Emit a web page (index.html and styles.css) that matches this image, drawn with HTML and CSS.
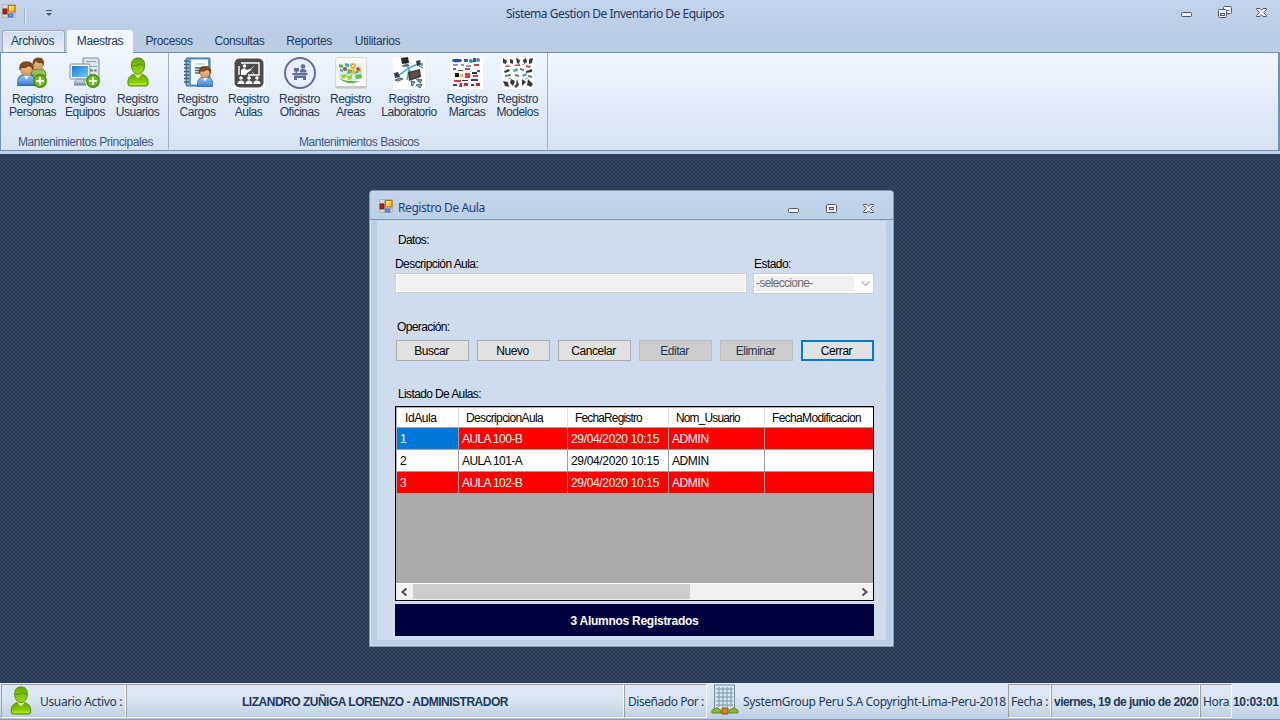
FILE: index.html
```html
<!DOCTYPE html>
<html lang="es">
<head>
<meta charset="utf-8">
<title>Sistema Gestion De Inventario De Equipos</title>
<link rel="stylesheet" href="styles.css">
</head>
<body>
<svg class="defs" width="0" height="0">
  <defs>
    <linearGradient id="green" x1="0" y1="0" x2="0" y2="1"><stop offset="0" stop-color="#64a80c"/><stop offset="1" stop-color="#9be000"/></linearGradient>
    <linearGradient id="blue" x1="0" y1="0" x2="0" y2="1"><stop offset="0" stop-color="#9cc8f4"/><stop offset="1" stop-color="#3f80d0"/></linearGradient>
    <linearGradient id="skin" x1="0" y1="0" x2="0" y2="1"><stop offset="0" stop-color="#f2c48c"/><stop offset="1" stop-color="#d69a62"/></linearGradient>
    <linearGradient id="screen" x1="0" y1="0" x2="1" y2="1"><stop offset="0" stop-color="#1b7cd4"/><stop offset="1" stop-color="#6cc8fb"/></linearGradient>
    <linearGradient id="gold" x1="0" y1="0" x2="1" y2="1"><stop offset="0" stop-color="#ffeb8a"/><stop offset="1" stop-color="#eeaa00"/></linearGradient>
    <symbol id="app" viewBox="0 0 14 14">
      <path d="M.5.5h13v13H.5zM.5 4.500h5M5.500 .5v13M5.500 9.500h8" fill="#d3d7df" stroke="#b5b5b5"/>
      <rect x="1" y="5" width="4" height="5" fill="#b91a12" stroke="#7c1414" stroke-width=".8"/>
      <rect x="6.500" y="1.500" width="6.500" height="6.500" fill="url(#gold)" stroke="#b27600"/>
      <rect x="6.500" y="10" width="4.500" height="3" fill="#5c9bf0" stroke="#2f62c4" stroke-width=".8"/>
    </symbol>
    <symbol id="user" viewBox="0 0 22 30">
      <path d="M1 25c0-5 3-7 7-8h6c4 1 7 3 7 8v2q0 2-2 2H3q-2 0-2-2z" fill="url(#green)" stroke="#4f8d0a"/>
      <path d="M7.500 17.500l3.500 4 3.500-4-1-2h-5z" fill="#dce878"/>
      <path d="M4.500 8C4.500 3 7 1 11 1s6.500 2 6.500 7c0 6-3 9-6.500 9s-6.500-3-6.500-9z" fill="url(#green)" stroke="#4f8d0a"/>
      <path d="M5.500 8.500c4 1 6-1 8-1.500 1.500 1 2 1.500 3.500 1.500" fill="none" stroke="#538f08"/>
      <path d="M3 27h16" stroke="#c0ec42"/>
    </symbol>
    <symbol id="man" viewBox="0 0 18 24">
      <path d="M.6 20c0-4 2-6 6-7h5c4 1 6 3 6 7v3.400H.6z" fill="url(#blue)" stroke="#3568a8"/>
      <path d="M6 13l3 5 3-5z" fill="#fff"/>
      <path d="M3.500 7q0-5 5.500-5t5.500 5q0 7-5.500 7T3.500 7z" fill="url(#skin)" stroke="#9a6437" stroke-width=".7"/>
      <path d="M2.500 8.500Q1.500.7 9 .7t6.500 7.800l-1.500-2.500-3-1.500Q8 7.500 4 6z" fill="#7d4a20" stroke="#59320f" stroke-width=".7"/>
    </symbol>
    <symbol id="plus" viewBox="0 0 14 14">
      <circle cx="7" cy="7" r="6.300" fill="#6cc010" stroke="#408308" stroke-width="1.200"/>
      <path d="M7 3.200v7.600M3.200 7h7.600" stroke="#fff" stroke-width="2.200"/>
    </symbol>
    <symbol id="minimize" viewBox="0 0 11 5"><rect x=".5" y=".5" width="10" height="4" rx="1" fill="#f2f5fb" stroke="#50566a"/></symbol>
    <symbol id="close" viewBox="0 0 11 9">
      <path d="M.5.5H4l1.500 1.700L7 .5h3.500v1l-3 3 3 3v1H7L5.500 6.800 4 8.500H.5v-1l3-3-3-3z" fill="#f5f7fc" stroke="#50566a"/>
    </symbol>
  </defs>
</svg>

<div class="app">
  <header class="titlebar">
    <svg class="app-icon" width="14" height="14"><use href="#app"/></svg>
    <span class="quick-sep"></span>
    <svg class="quick-arrow" width="6" height="6" viewBox="0 0 6 6"><path d="M0 .5h6" stroke="#50566a"/><path d="M0 3h6L3 6z" fill="#50566a"/></svg>
    <h1 class="app-title">Sistema Gestion De Inventario De Equipos</h1>
    <div class="app-controls">
      <svg width="11" height="5"><use href="#minimize"/></svg>
      <svg class="restore" width="14" height="12" viewBox="0 0 14 12"><rect x="5.500" y=".5" width="8" height="7" rx="1" fill="#f2f5fb" stroke="#50566a"/><path d="M9 4.500h2.500" stroke="#50566a"/><rect x=".5" y="3.500" width="8" height="8" rx="1" fill="#f2f5fb" stroke="#50566a"/><rect x="2.500" y="7.500" width="4" height="2" fill="#cddaeb" stroke="#50566a"/></svg>
      <svg width="11" height="9"><use href="#close"/></svg>
    </div>
  </header>

  <nav class="tabs">
    <span class="tab tab-file">Archivos</span>
    <span class="tab tab-active">Maestras</span>
    <span class="tab tab-procesos">Procesos</span>
    <span class="tab tab-consultas">Consultas</span>
    <span class="tab tab-reportes">Reportes</span>
    <span class="tab tab-util">Utilitarios</span>
  </nav>

  <section class="ribbon">
    <div class="group group-main">
      <div class="tools">
        <div class="tool w55">
          <svg width="32" height="32" viewBox="0 0 32 32"><g><path d="M14 18q0-5 5-6h6q4 1 4 7z" fill="#93c05a" stroke="#5c8a2c"/><path d="M16.500 6q0-4 5-4t4.500 4q0 7-4.500 7t-5-7z" fill="url(#skin)" stroke="#9a6437" stroke-width=".6"/><path d="M15.500 8Q15 .6 21.500.6T27 9l-2-3q-5 1-6-2-1 3-3.500 4z" fill="#7d4a20"/></g><use href="#man" x="0" y="4" width="19" height="25"/><use href="#plus" x="16" y="17" width="14" height="14"/></svg>
          <span>Registro<br>Personas</span>
        </div>
        <div class="tool w50">
          <svg width="32" height="32" viewBox="0 0 32 32"><path d="M14 1h14q2 0 2 2v20H14z" fill="#dce5ef" stroke="#788fa9"/><path d="M17 4.500h10M22 9.500h6" stroke="#88a4be"/><path d="M21 13.500h3" stroke="#29a64a" stroke-width="2"/><path d="M25.500 13.500h2" stroke="#e03131" stroke-width="2"/><rect x="1" y="7" width="20" height="15" rx="1.500" fill="#edf3f8" stroke="#788fa9"/><rect x="3" y="9" width="16" height="11" fill="url(#screen)"/><path d="M8 22h6l2 4H5z" fill="#c6d2dd" stroke="#8798a8"/><path d="M5 27.500h12" stroke="#788fa9" stroke-width="2"/><use href="#plus" x="17" y="17" width="14" height="14"/></svg>
          <span>Registro<br>Equipos</span>
        </div>
        <div class="tool w55"><svg width="32" height="32" viewBox="0 0 32 32"><use href="#user" x="5" y="0" width="22" height="30"/></svg><span>Registro<br>Usuarios</span></div>
      </div>
      <div class="group-label">Mantenimientos Principales</div>
    </div>
    <div class="group group-basic">
      <div class="tools">
        <div class="tool w51"><svg width="32" height="32" viewBox="0 0 32 32"><rect x="4" y="1" width="24" height="28" rx="1" fill="#5e9bc9" stroke="#3b6f9c"/><rect x="9" y="2.500" width="17" height="25" fill="#f5f9fc"/><path d="M6 2v26" stroke="#8fc0e3" stroke-width="2"/><path d="M2 4h5M2 7.500h5M2 11h5M2 14.500h5M2 18h5M2 21.500h5M2 25h5" stroke="#4c5b68" stroke-width="1.400"/><path d="M14 7h9" stroke="#71a2cd" stroke-dasharray="2 1"/><path d="M13 11h9M13 13.500h5M13 16h5" stroke="#55606e" stroke-width="1.400"/><use href="#man" x="15" y="8.500" width="16" height="21.500"/></svg><span>Registro<br>Cargos</span></div>
        <div class="tool w51"><svg width="32" height="32" viewBox="0 0 32 32"><path d="M0 0h32v32H0z" fill="#fff"/><rect x="1.500" y="1.500" width="29" height="29" rx="5" fill="#4b4b4b"/><path d="M8 6h18v12H15M6 18V9" fill="none" stroke="#fff" stroke-width="1.400"/><circle cx="11.500" cy="9" r="1.800" fill="#fff"/><path d="M8 18v-5l3-2 3 2 4-1.500.5 1.500-4.500 3-1 2z" fill="#fff"/><path d="M17 13l4-4M19 15l2 2" stroke="#bbb"/><g fill="#fff"><circle cx="8" cy="21" r="1.800"/><circle cx="16" cy="21" r="1.800"/><circle cx="24" cy="21" r="1.800"/><path d="M4.500 27q0-3.500 3.500-3.500t3.500 3.500zM12.500 27q0-3.500 3.500-3.500t3.500 3.500zM20.500 27q0-3.500 3.500-3.500t3.500 3.500z"/></g></svg><span>Registro<br>Aulas</span></div>
        <div class="tool w51"><svg width="32" height="32" viewBox="0 0 32 32"><circle cx="16" cy="16" r="15" fill="#e6effa" stroke="#5f6c9c" stroke-width="2"/><g fill="#5f6c9c"><circle cx="19" cy="9.500" r="2.300"/><path d="M16 15.500V14q0-2 3-2t3.500 2v1.500zM10 11h5v3.500h-2v1.500h-1.500v-1.500H10zM8.500 16h15v2h-15zM10 18.500h12V23h-3v-2h-6v2h-3z"/></g></svg><span>Registro<br>Oficinas</span></div>
        <div class="tool w51"><svg width="32" height="32" viewBox="0 0 32 32"><rect x=".5" y=".5" width="31" height="31" rx="2" fill="#f8f8f6" stroke="#d8d9d7"/><path d="M1 30h30" stroke="#c7c8c5" stroke-width="2"/><path d="M4 6l7 1 5-1 10 1 2 14-9 3-8-2-7 1z" fill="#d4edf2"/><path d="M4 7l4 1v3l-4-1zM13 12l4 1v3l-5 1zM20 18l6-1 1 4-6 1z" fill="#5fbb46"/><path d="M6 18l5-1 1 3-5 2zM12 19l5-1v4l-4 1zM22 12l4-1v4l-4 1z" fill="#a0d42e"/><path d="M10 6l4 1v3l-4-1zM18 15l5-1v2l-4 1zM5 12l3 1v2l-3-1z" fill="#33a5d5"/><path d="M5 22q8 3 20 2l-6 2q-8 1-14-4z" fill="#57ad35"/><circle cx="10" cy="12" r="2" fill="#e43a22"/><path d="M15.500 18l2.500-7 3 5" fill="#f0bd2e"/><circle cx="18" cy="9" r="2.700" fill="#f3a521"/><circle cx="23" cy="12" r="1.800" fill="#e43a22"/><circle cx="18" cy="9" r="1" fill="#fff"/></svg><span>Registro<br>Areas</span></div>
        <div class="tool w66"><svg width="32" height="32" viewBox="0 0 32 32"><path d="M0 0h32v32H0z" fill="#fff"/><path d="M5 19l11-8 11-5M12 5l5 9 9 11M16 13l-2 10" stroke="#40a6ca" stroke-width="1.500" fill="none"/><path d="M8 1l7-1 1 6-7 1z" fill="#20272d"/><path d="M9 8l6-1 2 2-7 1z" fill="#596a74"/><path d="M23 4l4-1 1 5-4 1zM1 16l4-1 2 5-5 1z" fill="#303b43"/><path d="M28 6h2v3h-2z" fill="#7aa6b8"/><path d="M15 15l12-3 1 8-12 4z" fill="#393c3e"/><path d="M17 16l8-2 1 5-8 3z" fill="#65503f"/><path d="M18 24l4 1-3 4zM25 22l4 1-2 3zM23 28l6-1-2 4z" fill="#8eaebc" stroke="#475e6b"/><path d="M2 23l5-2 3 1-5 2zM26 9l4 2" stroke="#4b626f" fill="#799aac"/></svg><span>Registro<br>Laboratorio</span></div>
        <div class="tool w50"><svg width="32" height="32" viewBox="0 0 32 32"><path d="M0 0h32v32H0z" fill="#fff"/><ellipse cx="6" cy="3.500" rx="5" ry="1.800" fill="#234ca4"/><path d="M13 2h4v3h-4zM22 1h3v4h-3zM7 13h5v1H7zM26 13h3v2h-3z" fill="#4d5970"/><circle cx="20" cy="4" r="2" fill="#2f86c5"/><circle cx="27" cy="3" r="2" fill="#4a83c1"/><path d="M2 8h5M10 8h3M15 9h5" stroke="#8996bb" stroke-width="2"/><path d="M23 8h5M2 12h3M14 12h5M22 19h5M3 24h7" stroke="#d83b48" stroke-width="2"/><path d="M4 16h4v4H4z" fill="#111"/><path d="M9 17h3v3H9z" fill="#efb92e"/><path d="M14 16h5v5h-5z" fill="#d83b48"/><path d="M21 15h5v2h-5zM11 23h6v1h-6z" fill="#333"/><path d="M20 23h7M2 28h4M20 28h3" stroke="#233f8f" stroke-width="2"/><path d="M9 26h2v4H8zM13 26h4v3h-4zM25 26h4v3h-4z" fill="#c7273e"/></svg><span>Registro<br>Marcas</span></div>
        <div class="tool w51"><svg width="32" height="32" viewBox="0 0 32 32"><path d="M0 0h32v32H0z" fill="#fff"/><g fill="#373b40"><path d="M1 1l4 3-1 3-3-1zM8 2l3 1v4L8 6zM14 1l4 2-1 4-2-1zM21 3l3-2 1 4-3 2zM27 2l4-1-1 5-3 1zM2 14l5-2 1 2-5 2zM24 14l6-2v3l-6 1zM1 24l5 1 1 5-4-1zM9 22l4 2-2 5-3-3zM15 22l2 6-3 3-2-2 2-1zM20 22l4 3-4 4zM26 22l5 5-2 3-4-2z"/></g><path d="M12 8l6-1v2h-5zM3 9l4-1v2H3zM24 8l5 1-1 2-4-1z" fill="#bd5947"/><path d="M11 13l4-2 1 3-4 1zM20 18l4-2 1 2-4 2z" fill="#42a8a4"/><path d="M3 19l6-1M13 18l4 1M18 12l4 1M26 19l4 1" stroke="#6d7c84" stroke-width="2"/><path d="M6 8l3 2M20 8l3-1M6 22l3-1M23 22l3-1" stroke="#9ba4aa"/></svg><span>Registro<br>Modelos</span></div>
      </div>
      <div class="group-label">Mantenimientos Basicos</div>
    </div>
  </section>

  <main class="desktop">
    <section class="window">
      <header class="window-title">
        <svg width="14" height="14"><use href="#app"/></svg>
        <h2>Registro De Aula</h2>
        <div class="window-controls">
          <svg class="window-min" width="11" height="5"><use href="#minimize"/></svg>
          <svg width="11" height="9" viewBox="0 0 11 9"><rect x=".5" y=".5" width="10" height="8" rx="1" fill="#f2f5fb" stroke="#50566a"/><rect x="3.500" y="3.500" width="4" height="2" fill="#d3deee" stroke="#50566a"/></svg>
          <svg width="11" height="9"><use href="#close"/></svg>
        </div>
      </header>
      <div class="client">
        <section class="box box-data">
          <span class="legend">Datos:</span>
          <div class="field field-desc"><label>Descripción Aula:</label><div class="input"></div></div>
          <div class="field field-state"><label>Estado:</label><div class="select"><span>-seleccione-</span><svg width="9" height="6" viewBox="0 0 9 6"><path d="M.5.500l4 4 4-4" fill="none" stroke="#aeb0b3" stroke-width="1.200"/></svg></div></div>
        </section>
        <section class="box box-ops">
          <span class="legend">Operación:</span>
          <button class="btn">Buscar</button>
          <button class="btn">Nuevo</button>
          <button class="btn">Cancelar</button>
          <button class="btn disabled">Editar</button>
          <button class="btn disabled">Eliminar</button>
          <button class="btn focused">Cerrar</button>
        </section>
        <section class="box box-list">
          <span class="legend">Listado De Aulas:</span>
          <div class="grid">
            <div class="row head"><span>IdAula</span><span>DescripcionAula</span><span>FechaRegistro</span><span>Nom_Usuario</span><span>FechaModificacion</span></div>
            <div class="row red"><span class="selected">1</span><span>AULA 100-B</span><span class="date">29/04/2020 10:15</span><span>ADMIN</span><span></span></div>
            <div class="row"><span>2</span><span>AULA 101-A</span><span class="date">29/04/2020 10:15</span><span>ADMIN</span><span></span></div>
            <div class="row red"><span>3</span><span>AULA 102-B</span><span class="date">29/04/2020 10:15</span><span>ADMIN</span><span></span></div>
            <div class="scroll">
              <svg width="17" height="16" viewBox="0 0 17 16"><path d="M10.500 4.500L6.500 8l4 3.500" fill="none" stroke="#505050" stroke-width="2"/></svg>
              <div class="thumb"></div>
              <svg width="17" height="16" viewBox="0 0 17 16"><path d="M6.500 4.500l4 3.500-4 3.500" fill="none" stroke="#505050" stroke-width="2"/></svg>
            </div>
          </div>
        </section>
        <div class="banner">3 Alumnos Registrados</div>
      </div>
    </section>
  </main>

  <footer class="status">
    <div class="cell sunk s-user"><svg width="22" height="29"><use href="#user"/></svg><span class="t-user">Usuario Activo :</span></div>
    <div class="cell sunk s-name"><b class="t-name">LIZANDRO ZUÑIGA LORENZO - ADMINISTRADOR</b></div>
    <div class="cell sunk s-by"><span class="t-by">Diseñado Por :</span></div>
    <div class="cell s-company">
      <svg width="28" height="32" viewBox="0 0 28 32"><rect x="3.500" y="1" width="20" height="27" fill="#dce7ef" stroke="#71889b"/><path d="M5 5h17M5 9h17M5 13h17M5 17h17M5 21h17M8 3v20M12 3v20M16 3v20M20 3v20" stroke="#91aabd" stroke-width="1.500"/><path d="M11 24h6v6h-6z" fill="#cf842c" stroke="#8c5219"/><path d="M1 29q-1-4 3-4 2-3 4 0 3 1 2 4zM18 29q-1-4 3-4 2-3 4 0 3 1 2 4z" fill="#8bb934" stroke="#5d8920"/></svg>
      <span class="t-company">SystemGroup Peru S.A Copyright-Lima-Peru-2018</span>
    </div>
    <div class="cell sunk s-datel"><span class="t-datel">Fecha :</span></div>
    <div class="cell sunk s-date"><b class="t-date">viernes, 19 de junio de 2020</b></div>
    <div class="cell sunk s-hourl"><span class="t-hourl">Hora</span></div>
    <div class="cell s-hour"><b class="t-hour">10:03:01</b></div>
  </footer>
</div>
</body>
</html>
```
FILE: styles.css
```css
* { box-sizing: border-box; }
body { margin: 0; width: 1280px; height: 720px; overflow: hidden; font: 12px/13px "Liberation Sans", Arial, sans-serif; color: #1e395b; }
svg { display: block; flex: none; }
.defs { position: absolute; }
.app { display: flex; flex-direction: column; height: 720px; background: #bbcee6; }

.titlebar { display: flex; height: 30px; background: linear-gradient(#c3d4ec, #bbcde5); }
.app-icon { margin: 4px 0 0 2px; }
.quick-sep { width: 2px; height: 17px; margin: 8px 0 0 8px; border-left: 1px solid #9fb0c8; border-right: 1px solid #e4edf8; }
.quick-arrow { margin: 10px 0 0 20px; }
.app-title { width: 218px; margin: 6px 0 0 454px; font: 12px/16px "Noto Sans", sans-serif; letter-spacing: -.49px; white-space: nowrap; }
.app-controls { display: flex; align-items: flex-start; margin: 8px 0 0 457px; gap: 26px; }
.app-controls svg:first-child { margin-top: 4px; }
.app-controls .restore { margin-top: -2px; margin-right: -2px; }

.tabs { display: flex; height: 22px; padding-left: 2px; background: #bbcde5; letter-spacing: -.37px; }
.tab { height: 23px; line-height: 23px; text-align: center; white-space: nowrap; }
.tab-file { width: 63px; height: 22px; margin-right: 2px; padding-right: 2px; border: 1px solid #9aa9bd; border-bottom: 0; border-radius: 3px 3px 0 0; background: linear-gradient(#cfdcec, #e9f1fa); box-shadow: inset 0 0 0 1px #e4edf7; line-height: 21px; }
.tab-active { position: relative; z-index: 1; width: 66px; background: #f2f7fd; border-radius: 3px 3px 0 0; }
.tab-procesos { width: 72px; }
.tab-consultas { width: 69px; }
.tab-reportes { width: 70px; }
.tab-util { width: 67px; }

.ribbon { display: flex; height: 99px; border: 1px solid #6f91b5; border-right-width: 2px; background: linear-gradient(#f0f6fd, #e2ecf8 50%, #d7e3f1); }
.group { display: flex; flex-direction: column; border-right: 1px solid #9db0c9; height: 96px; }
.group-main { width: 168px; padding-left: 4px; }
.group-basic { width: 379px; padding-left: 3px; }
.tools { display: flex; height: 81px; padding-top: 4px; }
.tool { display: flex; flex-direction: column; align-items: center; text-align: center; letter-spacing: -.48px; gap: 4px; }
.w50 { width: 50px; } .w51 { width: 51px; } .w55 { width: 55px; } .w66 { width: 66px; }
.group-label { padding: 2px 2px 0 0; text-align: center; color: #3d5785; letter-spacing: -.45px; }
.group-basic .group-label { padding-right: 1px; }

.desktop { position: relative; height: 532px; border-top: 3px solid #bed1e7; background-color: #2b3a57; background-image: radial-gradient(circle, #32445f 0 .7px, transparent .8px), radial-gradient(circle, #32445f 0 .7px, transparent .8px); background-size: 4px 4px; background-position: 0 0, 2px 2px; }
.window { position: absolute; left: 369px; top: 36px; width: 525px; height: 457px; border: 1px solid #8797ab; border-radius: 4px 4px 0 0; background: #bbcee6; box-shadow: inset 1px 0 #dbe9f5, inset -1px -1px #c9e0ef; overflow: hidden; }
.window-title { display: flex; height: 29px; padding: 0 19px 0 9px; border-bottom: 1px solid #8797ab; background: linear-gradient(#c4d5ec, #bbcfe5); }
.window-title > svg { margin-top: 8px; }
.window-title h2 { margin: 9px auto 0 5px; font: 12px/16px "Noto Sans", sans-serif; color: #1f3f77; letter-spacing: -.42px; }
.window-controls { display: flex; gap: 26.500px; margin-top: 13px; }
.window-controls .window-min { margin-top: 4px; }
.client { width: 509px; height: 419px; margin: 1px 0 0 7px; padding: 18px 12px 0 13px; background: #cfdced; color: #000; }
.box { position: relative; display: flex; width: 491px; border: 1px solid #d5dae2; }
.legend { position: absolute; left: 4px; top: -6px; padding: 0 3px; background: #cfdced; letter-spacing: -.62px; white-space: nowrap; }
.box-ops .legend { left: 3px; }
.box-data { height: 74px; padding: 18px 5px 0 4px; gap: 6px; letter-spacing: -.56px; }
.field-desc { width: 352px; }
.field-state { width: 121px; }
.field label { display: block; height: 15px; }
.field-state label { padding-left: 1px; }
.input { height: 20px; border: 1px solid #ccc; background: #f0f0f0; box-shadow: inset 0 0 0 1px #fff; }
.select { display: flex; align-items: center; height: 21px; padding: 2px; border: 1px solid #ccc; background: #fff; color: #6d6d6d; letter-spacing: -.67px; }
.select span { width: 98px; height: 15px; line-height: 15px; background: #f0f0f0; }
.select svg { margin-left: 7px; }
.box-ops { height: 55px; margin-top: 13px; padding: 13px 5px 0; gap: 8px; }
.btn { width: 73px; height: 21px; padding: 1px 2px 0 0; border: 1px solid #adadad; background: #e1e1e1; color: #000; font: 12px/18px "Liberation Sans", Arial, sans-serif; letter-spacing: -.45px; }
.btn.disabled { border-color: #bfbfbf; background: #ccc; color: #1e395b; }
.btn.focused { border: 2px solid #0078d7; line-height: 16px; }
.box-list { height: 213px; margin-top: 12px; padding: 12px 5px 0 4px; }
.grid { display: flex; flex-direction: column; width: 479px; height: 195px; padding: 1px 0 0 1px; border: 1px solid #000; background: #aaa; }
.row { display: grid; grid-template-columns: 62px 109px 101px 96px 108px; height: 22px; color: #000; background: #fff; line-height: 23px; letter-spacing: -.4px; white-space: nowrap; }
.row .date { letter-spacing: -.34px; }
.row span { padding-left: 3px; border-right: 1px solid #a0a0a0; border-bottom: 1px solid #a0a0a0; overflow: hidden; }
.row span:nth-child(2) { letter-spacing: -.6px; }
.row span:last-child { border-right: 0; }
.row.head { height: 20px; line-height: 21px; }
.row.head span { padding-left: 7px; border-right-color: #e0e0e0; letter-spacing: -.65px; }
.row.head span:first-child { padding-left: 8px; letter-spacing: -.4px; }
.row.head span:nth-child(3), .row.head span:nth-child(4) { letter-spacing: -.8px; font-size: 11.900px; }
.row.red { background: #f00; color: #fff; }
.row .selected { background: #0078d7; }
.scroll { display: flex; height: 17px; margin: auto 0 0 -1px; background: #f0f0f0; border-top: 1px solid #fff; }
.thumb { width: 277px; height: 15px; margin-right: auto; background: #cdcdcd; }
.banner { position: relative; width: 479px; height: 32px; margin: -2px 0 0 5px; background: #000040; color: #fff; text-align: center; font-weight: bold; line-height: 34px; letter-spacing: -.27px; }

.status { display: flex; height: 37px; padding: 1px 0 2px 1px; border-bottom: 1px solid #7e9cc0; background: linear-gradient(#dfe9f5, #d8e4f1 50%, #bccde1); font: 12px/16px "Noto Sans", sans-serif; }
.cell { display: flex; align-items: center; height: 34px; padding-top: 2px; white-space: nowrap; flex: none; }
.cell svg { margin-top: -4px; }
.sunk { border: 1px solid; border-color: #a0a0a0 #fff #fff #a0a0a0; }
.cell b { font-family: "Liberation Sans", Arial, sans-serif; }
.s-user { width: 125px; padding-left: 8px; gap: 8px; }
.s-name { width: 498px; justify-content: center; }
.s-by { width: 83px; padding-left: 3px; }
.s-company { width: 301px; padding-left: 4px; gap: 4px; }
.s-datel { width: 43px; padding-left: 2px; }
.s-date { width: 149px; padding-left: 2px; }
.s-hourl { width: 32px; padding-left: 2px; }
.s-hour { width: 48px; padding-left: 1px; }
.t-user { letter-spacing: -.35px; }
.t-name { letter-spacing: -.49px; }
.t-by { letter-spacing: -.45px; }
.t-company { letter-spacing: -.33px; }
.t-datel { letter-spacing: -.3px; }
.t-hourl { letter-spacing: -.35px; }
.t-date { letter-spacing: -.52px; }
.t-hour { letter-spacing: -.3px; }
```
